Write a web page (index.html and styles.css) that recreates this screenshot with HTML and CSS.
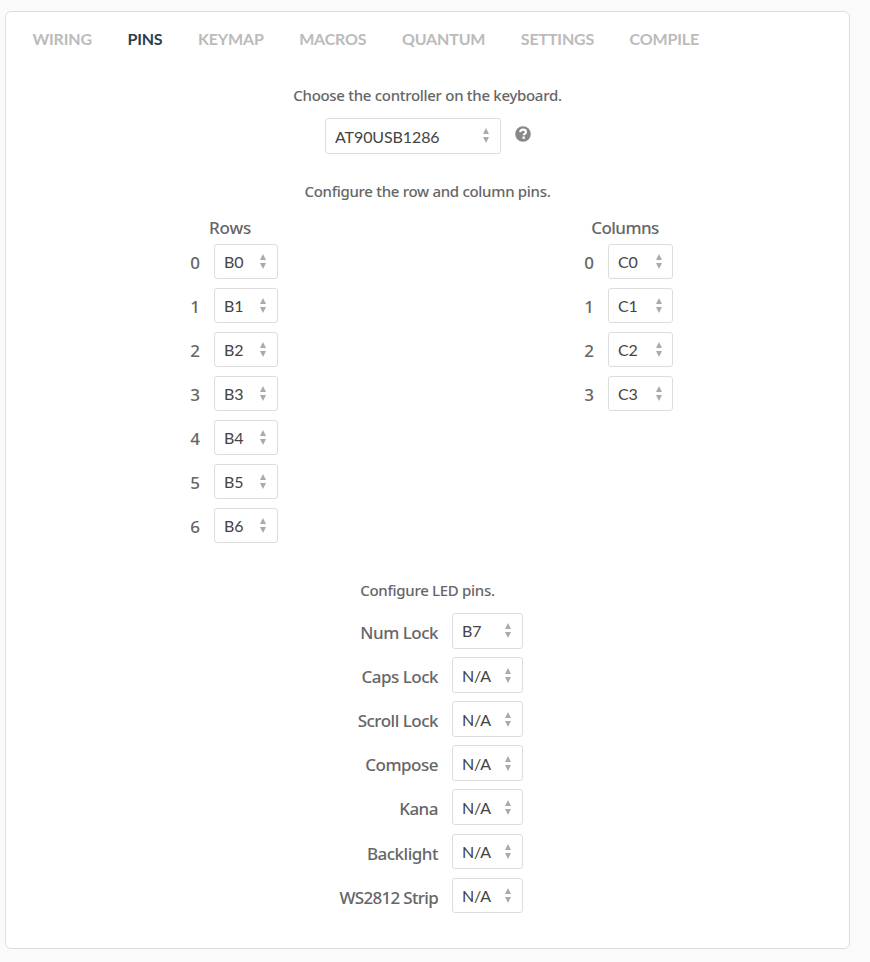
FILE: index.html
```html
<!DOCTYPE html>
<html lang="en">
<head>
<meta charset="utf-8">
<title>Pins</title>
<link rel="stylesheet" href="styles.css">
</head>
<body>
<main class="panel">
  <nav class="tabs">
    <a>WIRING</a><a class="active">PINS</a><a>KEYMAP</a><a>MACROS</a><a>QUANTUM</a><a>SETTINGS</a><a>COMPILE</a>
  </nav>
  <p class="hint hint-controller">Choose the controller on the keyboard.</p>
  <div class="controller">
    <div class="select">AT90USB1286<i class="arrows"></i></div>
    <svg class="help" viewBox="0 0 16 16" width="16" height="16">
      <circle cx="8" cy="8" r="7.8" fill="#888"/>
      <path d="M5.2 6.1C5.5 4.4 6.6 3.7 8.1 3.7c1.6 0 2.8.9 2.8 2.3 0 2-2.1 1.9-2.1 3.3" fill="none" stroke="#fff" stroke-width="2.2"/>
      <rect x="7.5" y="10.5" width="2.4" height="2.3" fill="#fff"/>
    </svg>
  </div>
  <p class="hint hint-matrix">Configure the row and column pins.</p>
  <div class="matrix">
    <section class="pins rows">
      <h2>Rows</h2>
      <div class="field"><label>0</label><div class="select">B0<i class="arrows"></i></div></div>
      <div class="field"><label>1</label><div class="select">B1<i class="arrows"></i></div></div>
      <div class="field"><label>2</label><div class="select">B2<i class="arrows"></i></div></div>
      <div class="field"><label>3</label><div class="select">B3<i class="arrows"></i></div></div>
      <div class="field"><label>4</label><div class="select">B4<i class="arrows"></i></div></div>
      <div class="field"><label>5</label><div class="select">B5<i class="arrows"></i></div></div>
      <div class="field"><label>6</label><div class="select">B6<i class="arrows"></i></div></div>
    </section>
    <section class="pins columns">
      <h2>Columns</h2>
      <div class="field"><label>0</label><div class="select">C0<i class="arrows"></i></div></div>
      <div class="field"><label>1</label><div class="select">C1<i class="arrows"></i></div></div>
      <div class="field"><label>2</label><div class="select">C2<i class="arrows"></i></div></div>
      <div class="field"><label>3</label><div class="select">C3<i class="arrows"></i></div></div>
    </section>
  </div>
  <p class="hint hint-led">Configure LED pins.</p>
  <div class="leds">
    <div class="field"><label>Num Lock</label><div class="select">B7<i class="arrows"></i></div></div>
    <div class="field"><label>Caps Lock</label><div class="select">N/A<i class="arrows"></i></div></div>
    <div class="field"><label>Scroll Lock</label><div class="select">N/A<i class="arrows"></i></div></div>
    <div class="field"><label>Compose</label><div class="select">N/A<i class="arrows"></i></div></div>
    <div class="field"><label>Kana</label><div class="select">N/A<i class="arrows"></i></div></div>
    <div class="field"><label>Backlight</label><div class="select">N/A<i class="arrows"></i></div></div>
    <div class="field"><label class="strip">WS2812 Strip</label><div class="select">N/A<i class="arrows"></i></div></div>
  </div>
</main>
</body>
</html>
```
FILE: styles.css
```css
* { box-sizing: border-box; }
body {
  margin: 0;
  padding: 11px 0 0 5px;
  height: 962px;
  overflow: hidden;
  background: #fafafa;
  color: #666;
  font-family: "Noto Sans", sans-serif;
  font-weight: 500;
}
.panel {
  width: 845px;
  height: 938px;
  background: #fff;
  border: 1px solid #ddd;
  border-radius: 6px;
}
.tabs {
  display: flex;
  gap: 35.5px;
  padding: 16px 0 0 26.4px;
  height: 72px;
  font: 700 16px/21px Lato, sans-serif;
  letter-spacing: -0.17px;
  color: #bbb;
}
.tabs .active { color: #2c3e50; }
.hint {
  margin: 0;
  height: 22px;
  font-size: 15px;
  line-height: 22px;
  letter-spacing: -0.3px;
  text-align: center;
  white-space: nowrap;
}
.hint-controller { margin-bottom: 12px; }
.controller {
  display: flex;
  gap: 14px;
  padding-left: 319px;
  height: 62px;
}
.controller .select { width: 176px; height: 36px; padding-top: 1px; }
.help { margin-top: 8px; }
.select {
  display: flex;
  align-items: center;
  justify-content: space-between;
  height: 35px;
  padding: 0 11px 0 9px;
  border: 1px solid #ddd;
  border-radius: 3px;
  background: #fff;
  color: #444;
  font: 16px/20px Lato, sans-serif;
  letter-spacing: -0.1px;
}
.arrows {
  display: flex;
  flex-direction: column;
  gap: 3px;
}
.controller .arrows { margin-top: -2px; }
.arrows::before, .arrows::after {
  content: "";
  border: 3px solid transparent;
}
.arrows::before { border-top: 0; border-bottom: 6px solid #aaa; }
.arrows::after { border-bottom: 0; border-top: 6px solid #aaa; }
.matrix {
  display: flex;
  height: 377px;
  padding: 14px 0 0 180px;
}
.rows { flex: 0 0 394px; }
.columns { flex: 0 0 93px; }
h2 {
  margin: 0;
  height: 28px;
  font-size: 17px;
  font-weight: 500;
  line-height: 24px;
  letter-spacing: -0.6px;
  text-align: center;
}
.rows h2 { width: 88px; letter-spacing: -0.2px; }
.columns h2 { width: 90px; }
.field {
  display: flex;
  gap: 14px;
  height: 44px;
}
.field label {
  width: 14px;
  font-size: 17px;
  line-height: 38px;
  text-align: right;
  white-space: nowrap;
}
.rows .select { width: 64px; }
.columns .select { width: 65px; padding-right: 10px; }
.leds { padding: 12.3px 0 0 316px; }
.leds .field { height: 44.06px; }
.leds .field label { width: 116px; line-height: 39.2px; letter-spacing: -0.5px; }
.leds .field .strip { letter-spacing: -0.7px; }
.leds .select { width: 71px; height: 35.4px; padding-top: 1px; }
.leds .field:first-child .select { padding-top: 0; }
.leds .arrows { margin-top: -1px; }
```
